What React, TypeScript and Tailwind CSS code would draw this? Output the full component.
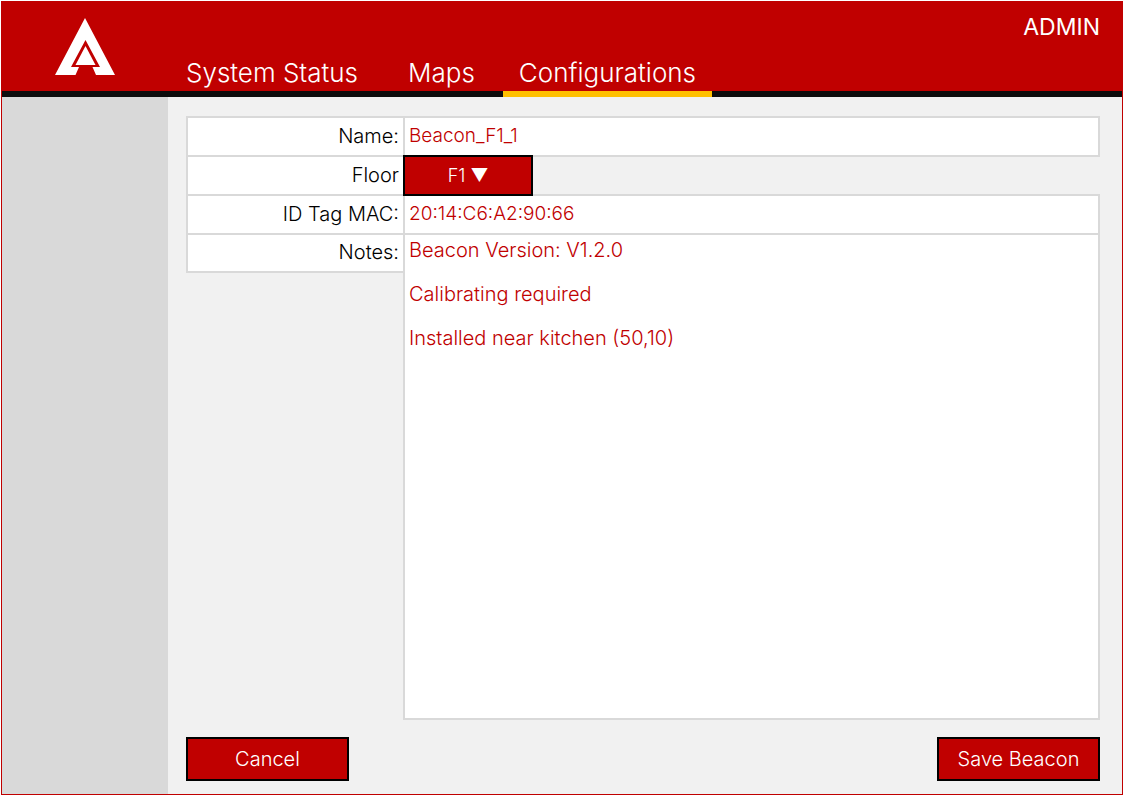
import { useState } from "react";
import type { ReactNode } from "react";

const tabs = [
  { label: "System Status", active: false, padding: "pl-[18px] pr-[34px]" },
  { label: "Maps", active: false, padding: "pl-4 pr-7" },
  { label: "Configurations", active: true, padding: "px-4" },
];

const labelCell =
  "flex w-[219px] shrink-0 items-center justify-end border-2 border-[#d9d9d9] bg-white pr-1 pb-0.5 text-xl font-light text-black";
const fieldCell =
  "-ml-0.5 min-w-0 flex-1 border-2 border-[#d9d9d9] bg-white px-1 font-light text-[#c00000] outline-none";
const actionButton =
  "h-11 w-[163px] border-2 border-black bg-[#c00000] text-xl font-light text-white";

function Logo() {
  return (
    <svg viewBox="0 0 60 57" className="h-[57px] w-[60px]" role="img" aria-label="Home">
      <path
        fill="#fff"
        fillRule="evenodd"
        d="M30 0 60 57H41L37.500 49H45L30.500 22 16 49H24L20.500 57H0Z"
      />
      <path fill="#fff" d="M30.500 28 40.500 47H20.500Z" />
    </svg>
  );
}

function Row({ id, label, children }: { id: string; label: string; children: ReactNode }) {
  return (
    <div className="-mt-0.5 flex h-[41px]">
      <label htmlFor={id} className={labelCell}>
        {label}
      </label>
      {children}
    </div>
  );
}

export default function App() {
  const [name, setName] = useState("Beacon_F1_1");
  const [mac, setMac] = useState("20:14:C6:A2:90:66");
  const [notes, setNotes] = useState(
    "Beacon Version: V1.2.0\n\nCalibrating required\n\nInstalled near kitchen (50,10)",
  );

  return (
    <div className="flex min-h-screen bg-white p-px font-['Inter',sans-serif]">
      <div className="flex flex-1 flex-col border border-[#c00000] bg-[#f1f1f1]">
        <header className="flex h-[95px] bg-[#c00000] text-white">
          <div className="flex w-[166px] items-start justify-center border-b-6 border-[#0d0d0d] pt-4">
            <Logo />
          </div>
          <nav className="flex items-stretch">
            {tabs.map((tab) => (
              <a
                key={tab.label}
                href="#"
                aria-current={tab.active ? "page" : undefined}
                className={
                  "flex items-end border-b-6 pb-0.5 text-[26px] leading-8 font-light " +
                  tab.padding +
                  (tab.active ? " border-[#ffc000]" : " border-[#0d0d0d]")
                }
              >
                {tab.label}
              </a>
            ))}
          </nav>
          <div className="flex flex-1 justify-end border-b-6 border-[#0d0d0d] pt-[9px] pr-[22px]">
            <span className="text-[23px] leading-8">ADMIN</span>
          </div>
        </header>

        <div className="flex flex-1">
          <aside className="w-[166px] shrink-0 bg-[#d9d9d9]" />
          <main className="flex flex-1 flex-col pt-[19px] pr-[22px] pb-[13px] pl-[18px]">
            <form className="flex flex-1 flex-col" onSubmit={(e) => e.preventDefault()}>
              <div className="flex flex-1 flex-col pt-0.5">
                <Row id="name" label="Name:">
                  <input
                    id="name"
                    value={name}
                    onChange={(e) => setName(e.target.value)}
                    className={fieldCell + " text-[19px]"}
                  />
                </Row>
                <Row id="floor" label="Floor">
                  <select
                    id="floor"
                    defaultValue="F1"
                    className="relative -ml-0.5 w-[130px] appearance-none border-2 border-black bg-[#c00000] text-center text-lg font-light text-white [text-align-last:center]"
                  >
                    <option value="F1">F1 ▼</option>
                  </select>
                </Row>
                <Row id="mac" label="ID Tag MAC:">
                  <input
                    id="mac"
                    value={mac}
                    onChange={(e) => setMac(e.target.value)}
                    className={fieldCell + " text-[19px]"}
                  />
                </Row>
                <div className="-mt-0.5 flex flex-1">
                  <label htmlFor="notes" className={labelCell + " h-10"}>
                    Notes:
                  </label>
                  <textarea
                    id="notes"
                    value={notes}
                    onChange={(e) => setNotes(e.target.value)}
                    className={fieldCell + " resize-none pt-1 text-xl leading-[22px]"}
                  />
                </div>
              </div>
              <div className="mt-[17px] flex justify-between">
                <button type="button" className={actionButton}>
                  Cancel
                </button>
                <button type="submit" className={actionButton}>
                  Save Beacon
                </button>
              </div>
            </form>
          </main>
        </div>
      </div>
    </div>
  );
}
